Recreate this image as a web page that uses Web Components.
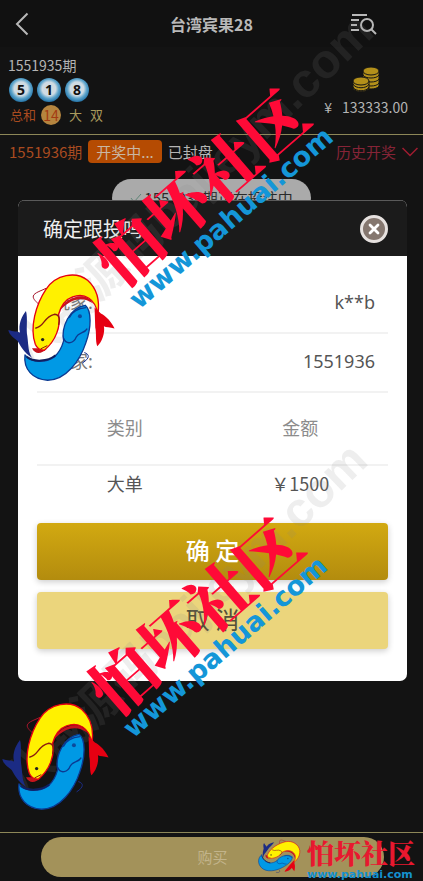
<!DOCTYPE html>
<html lang="zh-CN">
<head>
<meta charset="UTF-8">
<meta name="viewport" content="width=device-width, initial-scale=1">
<title>台湾宾果28</title>
<style>
  body {
    margin: 0;
    background: #131313;
    font-family: "Noto Sans CJK SC", "Noto Sans", sans-serif;
  }
</style>
</head>
<body>
<game-page>
  <game-header slot="top">台湾宾果28</game-header>
  <draw-result slot="top" issue="1551935期" balls="5,1,8" sum="14" tags="大,双" balance="133333.00"></draw-result>
  <issue-bar slot="top" issue="1551936期" state="开奖中...">已封盘</issue-bar>
  <toast-pill slot="middle">1551936期正在投注中</toast-pill>
  <buy-bar slot="bottom">购买</buy-bar>
  <follow-dialog slot="overlay" heading="确定跟投吗">
    <info-row label="玩家:">k**b</info-row>
    <info-row label="庄家:">1551936</info-row>
    <bet-table kind="大单" amount="￥1500"></bet-table>
    <gold-button>确 定</gold-button>
    <gold-button plain>取 消</gold-button>
  </follow-dialog>
  <brand-marks slot="overlay"></brand-marks>
</game-page>

<script>
class GamePage extends HTMLElement {
  constructor() {
    super();
    this.attachShadow({ mode: "open" }).innerHTML = `
      <style>
        :host {
          display: flex;
          flex-direction: column;
          min-height: 100vh;
          position: relative;
          overflow: hidden;
        }
        main { flex: 1; padding-top: 11px; }
      </style>
      <slot name="top"></slot>
      <main><slot name="middle"></slot></main>
      <slot name="bottom"></slot>
      <slot name="overlay"></slot>
    `;
  }
}

class GameHeader extends HTMLElement {
  constructor() {
    super();
    this.attachShadow({ mode: "open" }).innerHTML = `
      <style>
        :host {
          display: grid;
          grid-template-columns: 64px 1fr 64px;
          align-items: center;
          height: 47px;
          padding: 0 12px;
          box-sizing: border-box;
          background: #111;
          color: #b8b8b8;
        }
        h1 { margin: 0; font-size: 16px; line-height: 24px; text-align: center; }
        button { display: flex; padding: 0; border: 0; background: none; color: inherit; }
        svg { fill: none; stroke: currentColor; stroke-width: 2; }
      </style>
      <button aria-label="返回"><svg width="20" height="24" viewBox="0 0 20 24"><path d="M15.500 1.500L5 12L15.500 22.500"/></svg></button>
      <h1><slot></slot></h1>
      <button aria-label="记录"><svg width="30" height="22" viewBox="0 0 30 22"><path d="M5 2h15M4 7h8M4 12h6M4 17h8"/><circle cx="20" cy="12" r="6"/><path d="M24 16l5 5"/></svg></button>
    `;
  }
}

class DrawResult extends HTMLElement {
  constructor() {
    super();
    this.attachShadow({ mode: "open" });
  }

  connectedCallback() {
    const balls = this.getAttribute("balls").split(",");
    const tags = this.getAttribute("tags").split(",");
    this.shadowRoot.innerHTML = `
      <style>
        :host {
          display: flex;
          justify-content: space-between;
          padding: 8px 15px 9px 8px;
          border-bottom: 1px solid #8d8758;
          color: #b4b4b4;
          font-size: 14px;
          line-height: 20px;
        }
        .balls { display: flex; gap: 4px; padding: 3px 1px; }
        .ball {
          width: 24px;
          height: 24px;
          border-radius: 50%;
          background: radial-gradient(circle at 50% 45%, #cfdbe2 0 38%, #5fa5cb 54%, #2d7cae 70%, #175784);
          color: #111;
          font: bold 14px/24px "Open Sans", sans-serif;
          text-align: center;
        }
        .summary { display: flex; gap: 8px; align-items: center; padding-left: 2px; font-size: 13px; color: #a99a5c; }
        .label { color: #a94b20; margin-right: -3px; }
        .sum {
          width: 20px;
          height: 20px;
          border-radius: 50%;
          background: #b5853f;
          color: #a33a12;
          font-size: 14px;
          text-align: center;
        }
        .balance { display: flex; flex-direction: column; align-items: center; padding-top: 10px; }
        .balance svg { margin-bottom: 4px; }
        .money { display: flex; gap: 10px; }
      </style>
      <div>
        <div>${this.getAttribute("issue")}</div>
        <div class="balls">${balls.map((n) => `<span class="ball">${n}</span>`).join("")}</div>
        <div class="summary">
          <span class="label">总和</span>
          <span class="sum">${this.getAttribute("sum")}</span>
          ${tags.map((t) => `<span>${t}</span>`).join("")}
        </div>
      </div>
      <div class="balance">
        <svg width="28" height="28" viewBox="0 0 28 28" fill="#b3901a" stroke="#151515">
          <path d="M11 6v15c2 4 14 4 16 0V6z"/>
          <path d="M11 10c2 4 14 4 16 0M11 14c2 4 14 4 16 0M11 18c2 4 14 4 16 0" fill="none"/>
          <ellipse cx="19" cy="6" rx="8" ry="4"/>
          <path d="M1 16v7c2 5 14 5 16 0v-7z"/>
          <path d="M1 19c2 5 14 5 16 0M1 22c2 5 14 5 16 0" fill="none"/>
          <ellipse cx="9" cy="16" rx="8" ry="4"/>
        </svg>
        <div class="money"><span>¥</span><span>${this.getAttribute("balance")}</span></div>
      </div>
    `;
  }
}

class IssueBar extends HTMLElement {
  constructor() {
    super();
    this.attachShadow({ mode: "open" });
  }

  connectedCallback() {
    this.shadowRoot.innerHTML = `
      <style>
        :host {
          display: flex;
          align-items: center;
          gap: 6px;
          padding: 5px 5px 5px 9px;
          font-size: 15px;
          line-height: 23px;
          color: #b4b4b4;
        }
        .issue { color: #a94b20; }
        .state { padding: 0 8px; border-radius: 4px; background: #b54b02; color: #c9b7a4; }
        a { display: flex; align-items: center; gap: 6px; margin-left: auto; color: #862437; text-decoration: none; }
      </style>
      <span class="issue">${this.getAttribute("issue")}</span>
      <span class="state">${this.getAttribute("state")}</span>
      <span><slot></slot></span>
      <a href="#history">历史开奖
        <svg width="16" height="10" viewBox="0 0 16 10" fill="none" stroke="#a01c30" stroke-width="1.500"><path d="M0.500 1L8 8.500L15.500 1"/></svg>
      </a>
    `;
  }
}

class ToastPill extends HTMLElement {
  constructor() {
    super();
    this.attachShadow({ mode: "open" }).innerHTML = `
      <style>
        :host {
          display: flex;
          align-items: center;
          gap: 2px;
          width: fit-content;
          margin: 0 auto;
          padding: 8px 18px;
          border-radius: 24px;
          background: #aaa;
          color: #2a2a2a;
          font-size: 15px;
          line-height: 22px;
        }
      </style>
      <svg width="12" height="10" viewBox="0 0 12 10" fill="none" stroke="#5f8577"><path d="M1 5l3 4l7-8"/></svg>
      <slot></slot>
    `;
  }
}

class BuyBar extends HTMLElement {
  constructor() {
    super();
    this.attachShadow({ mode: "open" }).innerHTML = `
      <style>
        :host {
          display: block;
          padding: 4px 39px 4px 41px;
          border-top: 1px solid #8d8758;
        }
        button {
          width: 100%;
          height: 40px;
          border: 0;
          border-radius: 20px;
          background: #a3925a;
          color: #c2b48b;
          font: 15px/20px "Noto Sans CJK SC", sans-serif;
        }
      </style>
      <button><slot></slot></button>
    `;
  }
}

class FollowDialog extends HTMLElement {
  constructor() {
    super();
    this.attachShadow({ mode: "open" });
  }

  connectedCallback() {
    this.shadowRoot.innerHTML = `
      <style>
        :host {
          position: absolute;
          inset: 0;
          display: grid;
          align-items: center;
          padding: 0 16px 0 18px;
        }
        section { border-radius: 7px; overflow: hidden; background: #fff; color: #555; }
        header {
          display: flex;
          align-items: center;
          justify-content: space-between;
          padding: 13px 19px 12px 25px;
          border-top: 1px solid #5a5a5a;
          background: #1b1b1b;
          color: #eee;
        }
        h2 { margin: 0; font-size: 20px; line-height: 30px; font-weight: normal; }
        button { display: flex; padding: 0; border: 0; background: none; }
        .body { padding: 0 19px 20px; }
      </style>
      <section role="dialog" aria-label="${this.getAttribute("heading")}">
        <header>
          <h2>${this.getAttribute("heading")}</h2>
          <button aria-label="关闭">
            <svg width="28" height="28" viewBox="0 0 28 28">
              <circle cx="14" cy="14" r="12.500" fill="#85776f" stroke="#e6e1df" stroke-width="3"/>
              <path d="M10 10l8 8M18 10l-8 8" stroke="#fff" stroke-width="2.800" stroke-linecap="round"/>
            </svg>
          </button>
        </header>
        <div class="body"><slot></slot></div>
      </section>
    `;
  }
}

class InfoRow extends HTMLElement {
  constructor() {
    super();
    this.attachShadow({ mode: "open" });
  }

  connectedCallback() {
    this.shadowRoot.innerHTML = `
      <style>
        :host {
          display: flex;
          justify-content: space-between;
          padding: 14px 13px 17px 15px;
          border-bottom: 2px solid #f2f2f2;
          font-family: "Noto Sans", "Noto Sans CJK SC", sans-serif;
          font-size: 18px;
          line-height: 26px;
        }
        :host(:first-child) { padding-top: 33px; }
        .label { color: #777; }
      </style>
      <span class="label">${this.getAttribute("label")}</span>
      <span><slot></slot></span>
    `;
  }
}

class BetTable extends HTMLElement {
  constructor() {
    super();
    this.attachShadow({ mode: "open" });
  }

  connectedCallback() {
    this.shadowRoot.innerHTML = `
      <style>
        :host { display: block; }
        table {
          width: 100%;
          border-collapse: collapse;
          table-layout: fixed;
          font-size: 18px;
          line-height: 26px;
          text-align: center;
        }
        th { padding: 21px 0 24px; border-bottom: 2px solid #f2f2f2; color: #8c8c8c; font-weight: normal; }
        td { padding: 4px 0 27px; }
      </style>
      <table>
        <thead><tr><th>类别</th><th>金额</th></tr></thead>
        <tbody><tr><td>${this.getAttribute("kind")}</td><td>${this.getAttribute("amount")}</td></tr></tbody>
      </table>
    `;
  }
}

class GoldButton extends HTMLElement {
  constructor() {
    super();
    this.attachShadow({ mode: "open" }).innerHTML = `
      <style>
        :host { display: block; margin-bottom: 12px; }
        button {
          width: 100%;
          height: 57px;
          padding: 0 0 4px;
          border: 0;
          border-radius: 4px;
          background: linear-gradient(#d2a911, #b38c0e);
          box-shadow: 0 2px 6px rgb(0 0 0 / 0.2);
          color: #fff;
          font: 500 24px/36px "Noto Sans CJK SC", sans-serif;
        }
        :host([plain]) button { background: #ebd57c; color: #555039; font-weight: normal; }
      </style>
      <button><slot></slot></button>
    `;
  }
}

// two koi circling each other, drawn in a 330 x 370 box
const KOI = `
  <g stroke-width="4" stroke-linejoin="round">
    <path d="M60 150C66 170 60 205 64 225C68 255 66 275 80 292C50 272 45 255 35 240C20 228 10 222 7 207C22 213 35 210 42 215C36 190 48 165 60 150Z" fill="#1b2b84"/>
    <path d="M120 82C105 90 85 95 82 105C80 115 92 122 98 130" fill="none" stroke="#a5152b" stroke-width="3"/>
    <path d="M235 275C252 280 252 292 230 306" fill="none" stroke="#1b2b84" stroke-width="3"/>
    <path d="M266 140L285 158C300 165 318 185 326 203C312 198 300 200 294 196C298 215 288 245 274 256C268 240 272 215 268 200Z" fill="#e60012"/>
    <path d="M78 262C90 285 110 275 122 264L104 262ZM160 150C175 110 240 85 262 128C225 102 190 118 160 150Z" fill="#c7141d"/>
    <path d="M57 282C75 305 115 308 145 288C160 275 168 258 173 240C165 200 190 140 238 133C258 150 256 200 240 245C222 300 180 358 125 358C80 356 52 325 57 282Z" fill="#0099e5" stroke="#0b3a92"/>
    <path d="M88 250C70 200 90 130 120 85C150 40 210 30 245 58C275 85 282 120 276 160C268 112 235 95 200 108C180 115 165 135 158 160C165 195 150 240 115 268C100 268 92 260 88 250Z" fill="#fff100" stroke="#e60012"/>
    <path d="M88 202C118 195 112 168 145 160C162 160 162 178 158 192" fill="none" stroke="#8c1a10"/>
    <path d="M104 264C112 262 116 256 124 254" fill="none" stroke="#8c1a10" stroke-width="3"/>
    <path d="M173 232C182 254 204 246 211 228C218 214 236 218 244 203M190 170C200 150 215 142 240 140" fill="none" stroke="#0b3a92"/>
    <path d="M62 288C85 305 125 302 148 284" fill="none" stroke="#10205f" stroke-width="6"/>
    <circle cx="110" cy="236" r="5" fill="#222"/>
    <circle cx="222" cy="166" r="6" fill="#0b4a9c"/>
  </g>
`;

class BrandMarks extends HTMLElement {
  constructor() {
    super();
    const stamp = (name) => `
      <svg class="stamp ${name}" width="423" height="420" viewBox="0 0 423 420">
        <text class="ghost" transform="translate(370 53) rotate(-44)" text-anchor="end">八戒源码bajieym.com</text>
        <g transform="translate(0 280) scale(0.333)">${KOI}</g>
        <text class="name" transform="translate(115 309) rotate(-41)">怕坏社区</text>
        <text class="url" transform="translate(133 329) rotate(-41)">www.pahuai.com</text>
      </svg>
    `;
    this.attachShadow({ mode: "open" }).innerHTML = `
      <style>
        :host { position: absolute; inset: 0; pointer-events: none; overflow: hidden; }
        .stamp { position: absolute; left: 0; top: 410px; overflow: visible; }
        .upper { left: 6px; top: -19px; }
        .ghost { font: bold 48px "Liberation Sans", "Noto Sans CJK SC", sans-serif; fill: rgb(136 136 136 / 0.14); }
        .name { font: 900 64px "Noto Serif CJK SC", "Noto Sans CJK SC", serif; fill: #ff0a37; }
        .url { font: bold 27px "DejaVu Sans", sans-serif; fill: #1496d8; }
        .logo { position: absolute; right: 5px; bottom: 0; }
        .logo .name { font-size: 27px; fill: #e8182f; }
        .logo .url { font-size: 11px; fill: #1490cf; }
      </style>
      ${stamp("upper")}
      ${stamp("lower")}
      <svg class="logo" width="164" height="48" viewBox="0 0 164 48">
        <g transform="translate(25 24) rotate(44) scale(0.13) translate(-165 -205)">${KOI}</g>
        <text class="name" x="53" y="31">怕坏社区</text>
        <text class="url" x="53" y="45">www.pahuai.com</text>
      </svg>
    `;
  }
}

customElements.define("game-page", GamePage);
customElements.define("game-header", GameHeader);
customElements.define("draw-result", DrawResult);
customElements.define("issue-bar", IssueBar);
customElements.define("toast-pill", ToastPill);
customElements.define("buy-bar", BuyBar);
customElements.define("follow-dialog", FollowDialog);
customElements.define("info-row", InfoRow);
customElements.define("bet-table", BetTable);
customElements.define("gold-button", GoldButton);
customElements.define("brand-marks", BrandMarks);
</script>
</body>
</html>
